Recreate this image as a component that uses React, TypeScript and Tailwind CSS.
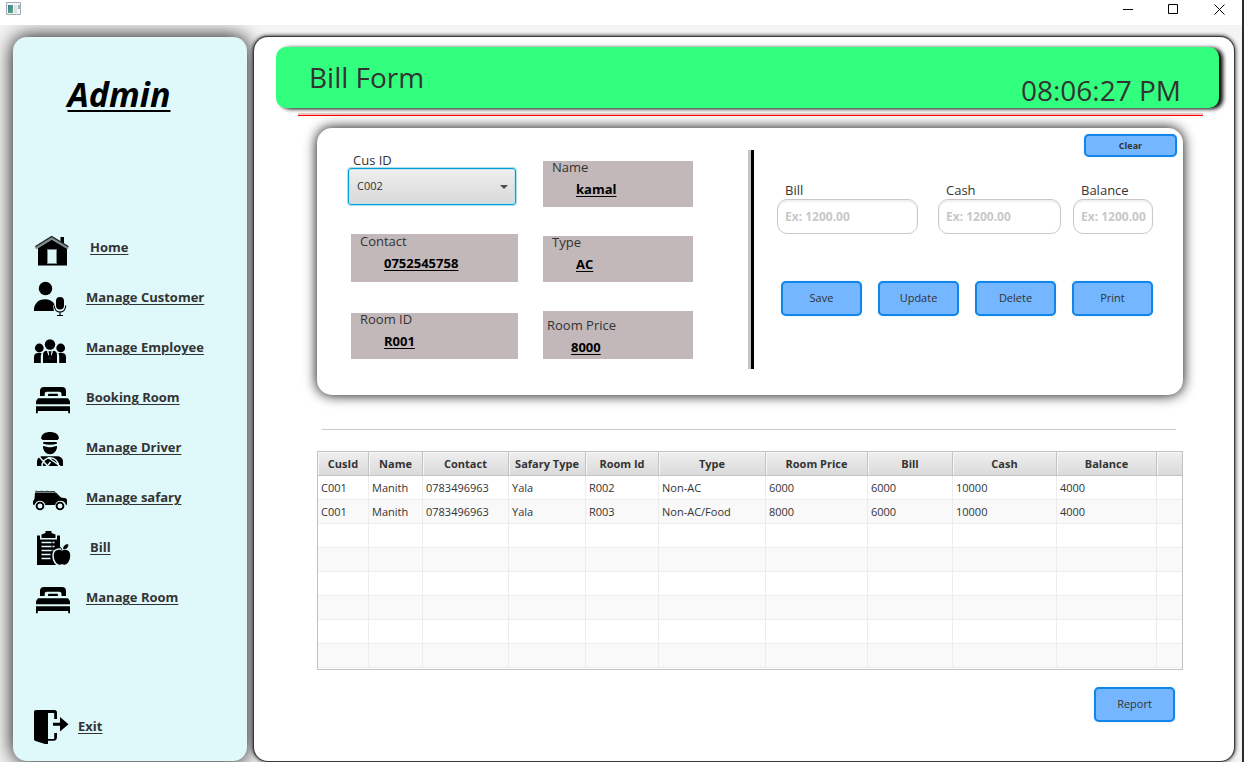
import type { ReactNode } from "react";

const PAPER = "#dff8fa";

function Icon({ children }: { children: ReactNode }) {
  return (
    <svg viewBox="0 0 36 36" className="mt-0.5 h-9 w-9 shrink-0 overflow-visible" aria-hidden="true">
      {children}
    </svg>
  );
}

const HomeIcon = () => (
  <Icon>
    <path d="M26.5 6h3.500v9h-3.500z" />
    <path d="M4 17 17.700 8.500 33 17v17.500H4z" />
    <path d="M1.500 17 17.700 7l16.500 10" fill="none" stroke="#7d8b8c" strokeWidth="3.200" />
    <path d="M1.500 15.500 17.700 5.500l16.500 10" fill="none" stroke="#1c2020" strokeWidth="1.100" />
    <path d="M13.500 18.500h9v14h-9z" fill={PAPER} stroke="#7d8b8c" />
  </Icon>
);

const CustomerIcon = () => (
  <Icon>
    <circle cx="11.500" cy="7.500" r="6.700" />
    <path d="M0 30v-2.500C1 21.500 5.500 18.300 11 18.300c4 0 7.500 1.700 9.500 5L19 25l1 5z" />
    <rect x="22" y="16" width="8" height="12.500" rx="4" />
    <path d="M20.300 24.500c0 4 2.500 6.500 5.700 6.500s5.700-2.500 5.700-6.500M26 31v3.500M23 34.500h6" fill="none" stroke="#000" strokeWidth="1.200" />
  </Icon>
);

const EmployeeIcon = () => (
  <Icon>
    <circle cx="5.300" cy="17" r="4.400" />
    <circle cx="26.700" cy="17" r="4.400" />
    <circle cx="16" cy="13.500" r="5.200" />
    <path d="M0 32v-6c0-2.500 1.500-4 4-4h3.500L6.800 25v7zM32 32v-6c0-2.500-1.500-4-4-4h-3.500l.7 3v7z" />
    <path d="M9 32v-8c0-2.500 1.200-4 3-4.200L16 21l4-1.200c1.800.2 3 1.700 3 4.200v8z" />
    <path d="M13.500 20.300 16 26.500l2.500-6.200" fill="none" stroke={PAPER} strokeWidth="1.200" />
    <path d="M15 20.300h2l-.3 2.500.8 3-1.500 1.700-1.500-1.700.8-3z" />
  </Icon>
);

const BedIcon = () => (
  <Icon>
    <path d="M6 15V9.500C6 7 8 6 10 6h18c2 0 4 1 4 3.500V15h-4.500v-2c0-1.500-1-2.300-2.300-2.300H13c-1.400 0-2.300.8-2.300 2.300v2z" />
    <path d="M14 15v-1c0-.8.500-1.300 1.300-1.300h7.400c.8 0 1.300.5 1.300 1.300v1z" />
    <path d="M4 17.300h30l2 3v3H2v-3zM2 25.300h34v7h-1.800V30H3.800v2.300H2z" />
  </Icon>
);

const DriverIcon = () => (
  <Icon>
    <path d="M7.200 7.500C7 3 11.500 1 16 1s9 2 8.800 6.500L23.500 9h-15z" />
    <path d="M9.200 11h13.600v1.800c-4 1.200-9.600 1.200-13.600 0z" />
    <path d="M9 15c2 0 3 1.200 7 1.200s5-1.200 7-1.200c.3 4.500-3 8.300-7 8.300S8.700 19.500 9 15z" />
    <path d="M3 35v-4.500c0-3 2-4.500 4.500-5.300h17c2.500.8 4.500 2.300 4.500 5.300V35z" />
    <path d="M8 35a8 8 0 0 1 16.500 0M5 25.500 13.500 35M14 26.500 26 35M13.500 35l3-4" fill="none" stroke={PAPER} strokeWidth="1.500" />
  </Icon>
);

const SafariIcon = () => (
  <Icon>
    <path d="M1 11.500h21l5 5 4.500.8c1.200.4 1.500 1.200 1.500 2.300v4.200h-1.200c-.5-2.500-2.700-4-5.300-4-2.800 0-5 1.700-5.300 4.200H11.300c-.3-2.500-2.500-4.200-5.300-4.200-2.500 0-4.700 1.500-5.300 4H-1v-3.500L.5 18z" />
    <path d="M2 11V9.500M7.500 11V9.500M13 11V9.500M2 10.500h19" stroke="#3c4646" fill="none" />
    <circle cx="6" cy="25" r="3.400" fill="none" stroke="#000" strokeWidth="1.900" />
    <circle cx="26" cy="25" r="3.400" fill="none" stroke="#000" strokeWidth="1.900" />
  </Icon>
);

const BillIcon = () => (
  <Icon>
    <path d="M11.500 0h6v2l4 1.500V7h-14V3.500l4-1.500z" />
    <path d="M3 4.500h3v4h17v-4h3V34H3z" />
    <path d="M7.500 11.500h13M7.500 15.500h13M7.500 19.500h12M7.500 23.500h9M7.500 27.500h9" stroke={PAPER} strokeWidth="1.500" />
    <path d="M18 10v14" stroke="#000" />
    <path
      d="M28 18.800c3-1.600 9-1 9 6 0 5.500-3.500 9.700-6.200 9.700-1.200 0-1.800-.6-2.800-.6s-1.600.6-2.800.6c-2.700 0-6.200-4.200-6.200-9.700 0-7 6-7.600 9-6z"
      stroke={PAPER}
      strokeWidth="1.500"
    />
    <path d="M28 19.500c-.2-2-1-3.200-2.500-3.500M29.500 18c-.3-2.500 1.500-4.500 4.500-4.500.3 2.800-1.500 4.700-4.500 4.500z" stroke="#000" strokeWidth=".6" />
  </Icon>
);

const ExitIcon = () => (
  <svg viewBox="0 0 36 36" className="h-9 w-9 shrink-0" aria-hidden="true">
    <path d="M0 3c0-1.300.8-2 2-2h18.500C22.300 1 23 2 23 3.500V10h-2.800V4H14v26h6.200v-6H23v3.500c0 2.800-1 4.200-3.500 4.200H14V35h-3L1.500 32C.5 31.700 0 31 0 30z" />
    <path d="M19 13.800h7V8l8.500 7.300L26 22.500v-5.700h-7z" />
  </svg>
);

const NAV = [
  { label: "Home", icon: <HomeIcon />, inset: true },
  { label: "Manage Customer", icon: <CustomerIcon /> },
  { label: "Manage Employee", icon: <EmployeeIcon /> },
  { label: "Booking Room", icon: <BedIcon /> },
  { label: "Manage Driver", icon: <DriverIcon /> },
  { label: "Manage safary", icon: <SafariIcon /> },
  { label: "Bill", icon: <BillIcon />, inset: true },
  { label: "Manage Room", icon: <BedIcon /> },
];

const COLUMNS = [
  { name: "CusId", width: "w-[51px]" },
  { name: "Name", width: "w-[54px]" },
  { name: "Contact", width: "w-[86px]" },
  { name: "Safary Type", width: "w-[77px]" },
  { name: "Room Id", width: "w-[73px]" },
  { name: "Type", width: "w-[107px]" },
  { name: "Room Price", width: "w-[102px]" },
  { name: "Bill", width: "w-[85px]" },
  { name: "Cash", width: "w-[104px]" },
  { name: "Balance", width: "w-[100px]" },
  { name: "", width: "w-auto" },
];

const ROWS = [
  ["C001", "Manith", "0783496963", "Yala", "R002", "Non-AC", "6000", "6000", "10000", "4000"],
  ["C001", "Manith", "0783496963", "Yala", "R003", "Non-AC/Food", "8000", "6000", "10000", "4000"],
  [], [], [], [], [], [],
];

const BUTTON =
  "rounded-[5px] border-2 border-[#0f86e8] bg-[#74b6ff] text-[#333] shadow-[0_0_1px_#74b6ff]";

function ActionButton({ children }: { children: ReactNode }) {
  return <button className={`${BUTTON} h-[35px] w-[81px] text-[11px]`}>{children}</button>;
}

function InfoBox({ label, value, size, pad = "pl-[9px]" }: { label: string; value: string; size: string; pad?: string }) {
  return (
    <div className={`flex flex-col gap-2 bg-[#c2b8b9] ${size} ${pad}`}>
      <span className="text-[13px] leading-3">{label}</span>
      <span className="pl-6 text-[13px] leading-4 font-bold text-black underline underline-offset-2">{value}</span>
    </div>
  );
}

function MoneyField({ id, label, grow }: { id: string; label: string; grow: string }) {
  return (
    <div className={`flex min-w-0 flex-col gap-px ${grow}`}>
      <label htmlFor={id} className="pl-2 text-[13px] leading-4">{label}</label>
      <input
        id={id}
        placeholder="Ex: 1200.00"
        className="h-[35px] w-full rounded-[10px] border border-[#c8c8c8] bg-white pl-[7px] text-xs font-bold shadow-[inset_0_2px_2px_#f0f0f0] placeholder:text-[#c8c8c8]"
      />
    </div>
  );
}

function TitleBar() {
  return (
    <header className="flex h-[25px] items-start justify-between bg-white pl-[6px]">
      <svg viewBox="0 0 16 13" className="mt-[2px] h-[13px] w-4" aria-hidden="true">
        <defs>
          <linearGradient id="app" x1="0" y1="0" x2="1" y2="1">
            <stop offset="0" stopColor="#3b7a9c" />
            <stop offset="1" stopColor="#5fb07c" />
          </linearGradient>
        </defs>
        <path d="M.5.5h14v12H.5z" fill="#f3f5f7" stroke="#a5abb0" />
        <path d="M2 3h5v8H2z" fill="url(#app)" />
        <path d="M8 3h3v8H8z" fill="#dde1e4" />
        <path d="M12 3h2v4h-2z" fill="#86c0b8" />
      </svg>
      <div className="flex">
        <button aria-label="Minimize" className="flex h-[18px] w-[46px] items-center justify-center">
          <svg viewBox="0 0 11 11" className="h-[11px] w-[11px]"><path d="M1 5.500h10" stroke="#000" /></svg>
        </button>
        <button aria-label="Maximize" className="flex h-[18px] w-[46px] items-center justify-center">
          <svg viewBox="0 0 11 11" className="h-[11px] w-[11px]"><path d="M.5.5h9v9h-9z" fill="none" stroke="#000" /></svg>
        </button>
        <button aria-label="Close" className="flex h-[18px] w-[46px] items-center justify-center">
          <svg viewBox="0 0 11 11" className="h-[11px] w-[11px]"><path d="m.5.5 10 10m0-10-10 10" stroke="#000" /></svg>
        </button>
      </div>
    </header>
  );
}

function Sidebar() {
  return (
    <aside className="flex w-[234px] shrink-0 flex-col rounded-[14px] bg-[#dff8fa] shadow-[0_0_20px_#000]">
      <h1 className="mt-[34px] pr-[22px] text-center text-[34px] leading-[46px] font-bold text-black italic underline decoration-2 underline-offset-3">
        Admin
      </h1>
      <ul className="mt-[106px] pl-[21px]">
        {NAV.map(({ label, icon, inset }) => (
          <li key={label}>
            <a href="#" className="flex h-[50px] items-center gap-4">
              {icon}
              <span className={`text-[13px] font-bold underline underline-offset-2 ${inset ? "ml-1" : ""}`}>{label}</span>
            </a>
          </li>
        ))}
      </ul>
      <a href="#" className="mt-auto mb-4 flex items-center gap-2 pl-[21px]">
        <ExitIcon />
        <span className="text-[13px] font-bold underline underline-offset-2">Exit</span>
      </a>
    </aside>
  );
}

function BillCard() {
  return (
    <section className="mt-3 mr-[51px] ml-[63px] grid h-[267px] grid-cols-[minmax(0,431fr)_6px_minmax(0,429fr)] rounded-[15px] bg-white shadow-[0_0_13px_#000]">
      <div className="grid grid-cols-[minmax(0,170fr)_minmax(0,150fr)] gap-x-[25px] pr-[55px] pl-[31px]">
        <div className="flex flex-col pt-6">
          <label htmlFor="cus" className="pl-[5px] text-[13px] leading-4">Cus ID</label>
          <div className="relative mr-0.5">
            <select
              id="cus"
              className="h-[37px] w-full appearance-none rounded-[3px] border border-[#039ed3] bg-linear-to-b from-[#efefef] to-[#d8d8d8] pl-2 text-[11px] shadow-[inset_0_0_0_1px_#c2e4ec,0_0_1px_1px_#a8dcec]"
            >
              <option>C002</option>
            </select>
            <svg viewBox="0 0 8 4" className="pointer-events-none absolute top-[17px] right-2 h-1 w-2" aria-hidden="true">
              <path d="M0 0h8L4 4z" fill="#4d4d4d" />
            </svg>
          </div>
          <div className="mt-[29px] flex flex-col gap-[31px] pl-[3px]">
            <InfoBox label="Contact" value="0752545758" size="h-[48px]" pad="pt-px pl-[9px]" />
            <InfoBox label="Room ID" value="R001" size="h-[46px]" />
          </div>
        </div>
        <div className="flex flex-col gap-[29px] pt-[33px]">
          <InfoBox label="Name" value="kamal" size="h-[46px]" />
          <InfoBox label="Type" value="AC" size="h-[46px]" />
          <InfoBox label="Room Price" value="8000" size="h-[48px]" pad="pt-2 pl-1" />
        </div>
      </div>
      <div className="mt-[22px] mb-[26px] border-r-[3px] border-l-[3px] border-r-black border-l-[#c4c4c4]" />
      <div className="flex flex-col pt-[6px]">
        <button className={`${BUTTON} mr-[6px] h-[23px] w-[93px] self-end text-[9px] font-bold`}>Clear</button>
        <div className="mt-[25px] flex pr-[30px] pl-[23px]">
          <MoneyField id="bill" label="Bill" grow="flex-[141] mr-5" />
          <MoneyField id="cash" label="Cash" grow="flex-[123] mr-3" />
          <MoneyField id="balance" label="Balance" grow="flex-[80]" />
        </div>
        <div className="mt-[47px] flex justify-between pr-[30px] pl-[27px]">
          <ActionButton>Save</ActionButton>
          <ActionButton>Update</ActionButton>
          <ActionButton>Delete</ActionButton>
          <ActionButton>Print</ActionButton>
        </div>
      </div>
    </section>
  );
}

function BillTable() {
  return (
    <div className="mt-[21px] mr-[51px] ml-[63px] border border-[#c3c3c3] bg-white pb-px">
      <table className="w-full table-fixed border-separate border-spacing-0 text-[11px]">
        <thead>
          <tr>
            {COLUMNS.map(({ name, width }) => (
              <th
                key={name}
                className={`h-6 border-r border-b border-[#c3c3c3] bg-linear-to-b from-[#efefef] to-[#dadada] p-0 pt-0.5 font-bold whitespace-nowrap shadow-[inset_1px_1px_0_#f6f6f6] last:border-r-0 ${width}`}
              >
                {name}
              </th>
            ))}
          </tr>
        </thead>
        <tbody>
          {ROWS.map((row, r) => (
            <tr key={r} className="even:bg-[#f9f9f9]">
              {COLUMNS.map((c, i) => (
                <td key={c.name} className="h-6 border-r border-b border-[#ececec] p-0 pt-0.5 pl-[3px] whitespace-nowrap last:border-r-0">
                  {row[i]}
                </td>
              ))}
            </tr>
          ))}
        </tbody>
      </table>
    </div>
  );
}

export default function App() {
  return (
    <div className="flex min-h-screen bg-[#2b2b2b] pr-[2px] font-['Open_Sans','Noto_Sans',sans-serif] text-[#333]">
      <div className="flex min-w-0 flex-1 flex-col bg-[#f4f4f4]">
        <TitleBar />
        <div className="flex flex-1 gap-[7px] overflow-hidden pt-3 pr-2 pb-px pl-[13px]">
          <Sidebar />
          <main className="flex min-w-0 flex-1 flex-col rounded-[14px] bg-white pt-[10px] shadow-[0_0_0_1px_#3a3a3a,0_0_4px_1px_#000]">
            <div className="mr-[15px] ml-[22px] flex h-[61px] items-start justify-between rounded-[10px] bg-[#32ff7e] pr-[38px] pl-[33px] shadow-[4px_1px_4px_#000]">
              <h2 className="pt-[10px] text-[28px] leading-10">Bill Form</h2>
              <time className="pt-[23px] text-[28px] leading-10">08:06:27 PM</time>
            </div>
            <div className="mt-[5px] mr-[31px] ml-11 h-[3px] border-b border-[#ff0000] bg-[#e8c4c4]" />
            <BillCard />
            <hr className="mt-[34px] mr-[58px] ml-[68px] border-[#cacaca]" />
            <BillTable />
            <div className="mt-[17px] mr-[59px] flex justify-end">
              <ActionButton>Report</ActionButton>
            </div>
          </main>
        </div>
      </div>
    </div>
  );
}
